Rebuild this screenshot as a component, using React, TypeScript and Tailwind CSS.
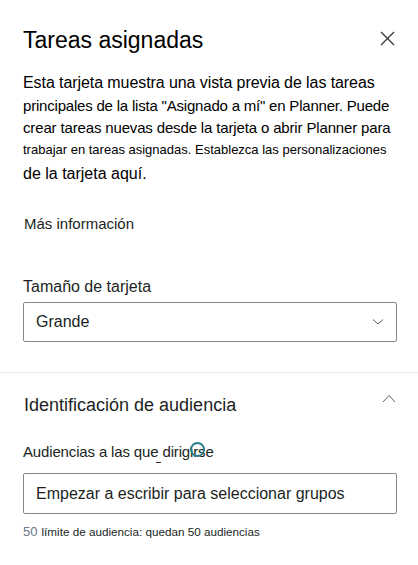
import React from "react";

export default function App() {
  return (
    <div
      className="w-[418px] h-[565px] bg-white text-[#201f1e] overflow-hidden relative"
      style={{ fontFamily: '"Liberation Sans", Arial, sans-serif' }}
    >
      <div className="px-[23px] pt-[24px]">
        <div className="flex items-start justify-between">
          <div className="text-[23px] leading-[32px] text-black">Tareas asignadas</div>
          <svg width="15" height="15" viewBox="0 0 15 15" className="mt-[7px] mr-[0px]">
            <path d="M1 1 L14 14 M14 1 L1 14" stroke="#323130" strokeWidth="1.2" fill="none" />
          </svg>
        </div>
        <div className="mt-[15px] text-black">
          <div className="text-[16px] leading-[23px] whitespace-nowrap tracking-[-0.08px]">Esta tarjeta muestra una vista previa de las tareas</div>
          <div className="text-[15px] leading-[23px] whitespace-nowrap tracking-[-0.2px]">principales de la lista "Asignado a mí" en Planner. Puede</div>
          <div className="text-[15px] leading-[22px] whitespace-nowrap tracking-[-0.15px]">crear tareas nuevas desde la tarjeta o abrir Planner para</div>
          <div className="text-[13px] leading-[22px] whitespace-nowrap">trabajar en tareas asignadas. Establezca las personalizaciones</div>
          <div className="text-[16px] leading-[26px] whitespace-nowrap">de la tarjeta aquí.</div>
        </div>
        <div className="mt-[27px] text-[15px] leading-[20px] pl-[1px]">Más información</div>
        <div className="mt-[42px] text-[16px] leading-[22px]">Tamaño de tarjeta</div>
        <div className="mt-[4px] h-[40px] w-[374px] border border-[#8a8886] rounded-[2px] flex items-center justify-between pl-[12px] pr-[12px]">
          <span className="text-[16px]">Grande</span>
          <svg width="12" height="8" viewBox="0 0 12 8">
            <path d="M1 1.5 L6 6 L11 1.5" stroke="#605e5c" strokeWidth="1" fill="none" />
          </svg>
        </div>
      </div>
      <div className="mt-[30px] h-[1px] bg-[#e8e8e8]" />
      <div className="px-[23px]">
        <div className="mt-[20px] flex items-center justify-between">
          <span className="text-[18px] leading-[24px] pl-[1px]">Identificación de audiencia</span>
          <svg width="14" height="9" viewBox="0 0 14 9" className="mt-[-14px] mr-[-1px]">
            <path d="M1 8 L7 1.5 L13 8" stroke="#605e5c" strokeWidth="1" fill="none" />
          </svg>
        </div>
        <div className="mt-[25px] text-[15px] leading-[20px] relative tracking-[-0.15px]">
          Audiencias a las que dirigirse
          <span className="absolute left-[133px] top-[20px] w-[5px] h-[1px] bg-[#323130]" />
          <span className="absolute left-[167px] top-[0px] w-[15px] h-[15px] rounded-full border-2 border-[#2b7d8c]" />
        </div>
        <div className="mt-[11px] h-[41px] w-[374px] border border-[#8a8886] rounded-[2px] flex items-center pl-[12px]">
          <span className="text-[16px] text-[#201f1e]">Empezar a escribir para seleccionar grupos</span>
        </div>
        <div className="mt-[8px] flex items-baseline gap-[4px]">
          <span className="text-[13px] text-[#6a7888]">50</span>
          <span className="text-[11.7px]">límite de audiencia: quedan 50 audiencias</span>
        </div>
      </div>
    </div>
  );
}
